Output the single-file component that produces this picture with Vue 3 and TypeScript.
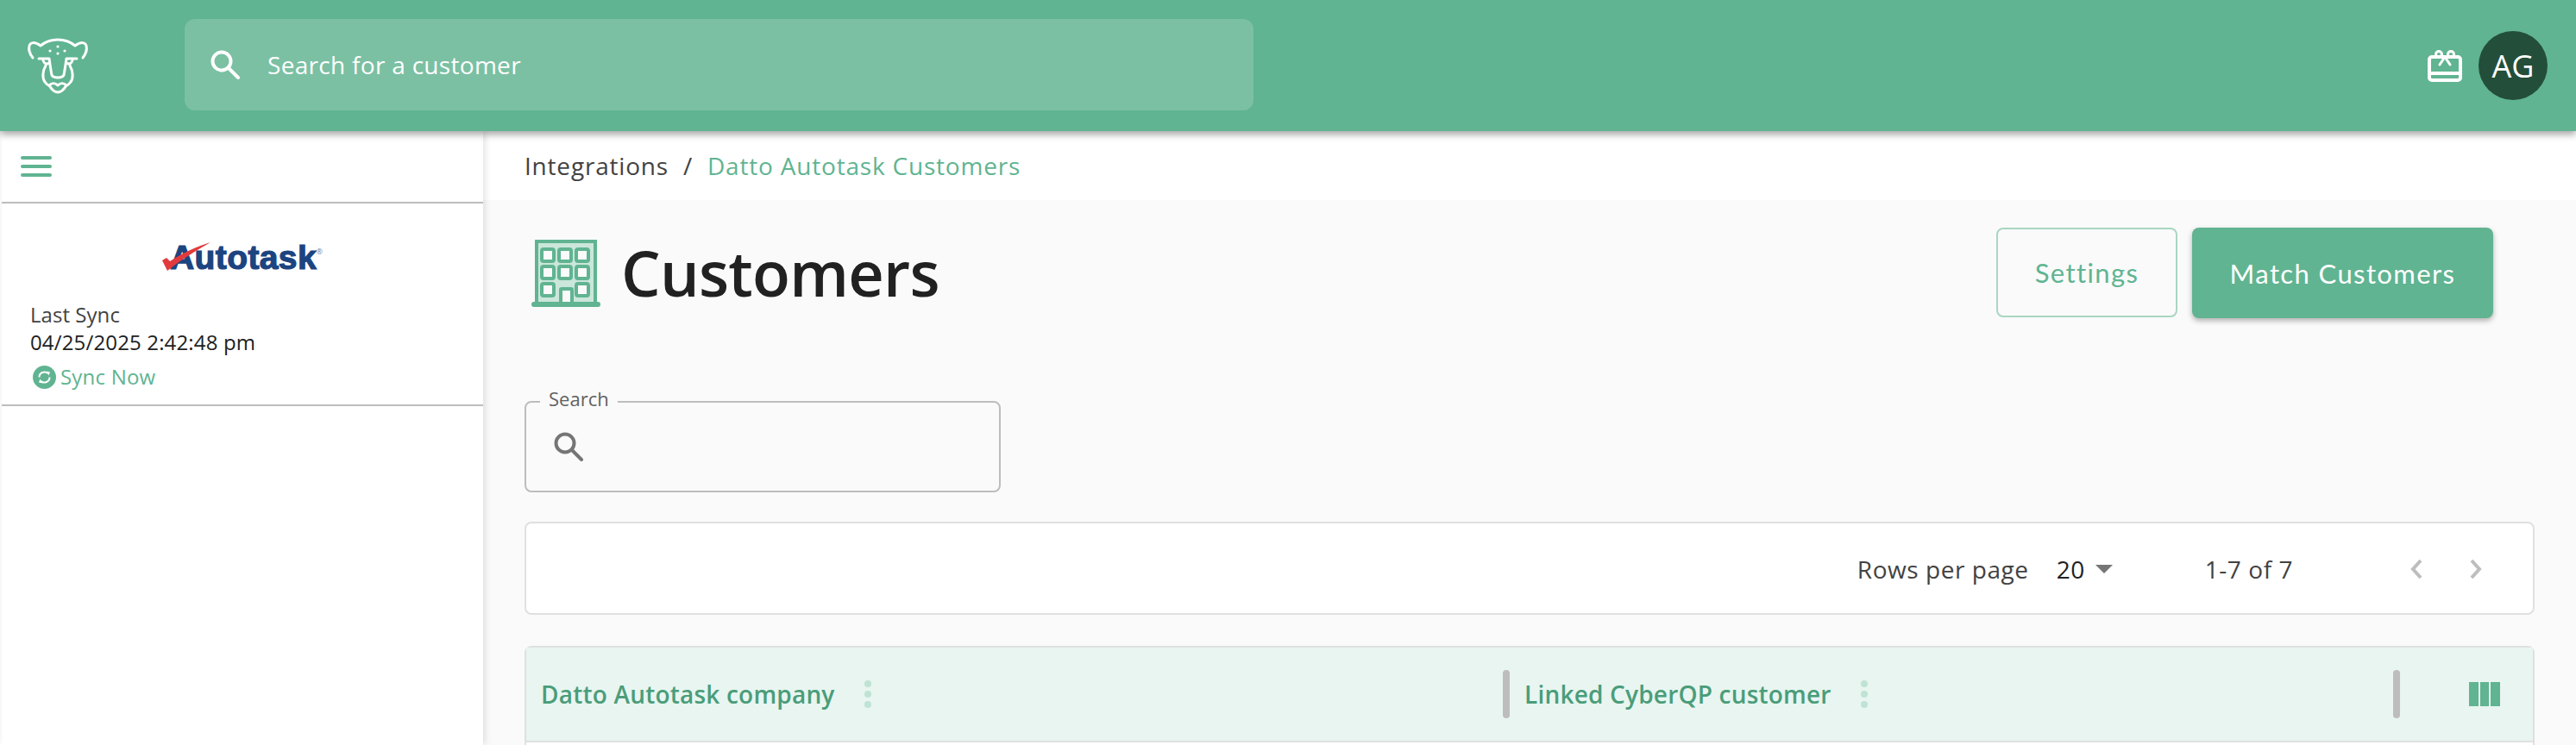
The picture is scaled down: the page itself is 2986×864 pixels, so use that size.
<script setup lang="ts">
const columns = ['Datto Autotask company', 'Linked CyberQP customer']
const windows = [
  [42, 21], [62, 21], [82, 21],
  [42, 41], [62, 41], [82, 41],
  [42, 61], [82, 61],
]
</script>

<template>
  <div class="app">
    <header class="topbar">
      <svg class="logo" viewBox="0 0 110 100" fill="none" stroke="#fff" stroke-width="3" stroke-linecap="round" stroke-linejoin="round">
        <path d="M28 47C24 42 23 37 24 33C25 29 30 28 37 33C43 28 50 26 57 26C64 26 71 28 77 33C84 28 89 29 90 33C91 37 90 42 86 47" />
        <path d="M35 48H47C48 55 49 62 50 67C52 71 62 71 64 67C65 62 66 55 67 48H79" />
        <path d="M40 50C41 54 44 55 47 53M74 50C73 54 70 55 67 53" />
        <path d="M43 56C39 63 39 71 42 75C44 78 46 79 48 80M71 56C75 63 75 71 72 75C70 78 68 79 66 80" />
        <path d="M47 79C50 76 54 76 57 79C60 76 64 76 67 79C64 84 60 87 57 87C54 87 50 84 47 79Z" />
        <g fill="#fff" stroke="none">
          <circle cx="48" cy="39" r="1.6" />
          <circle cx="57" cy="34" r="1.6" />
          <circle cx="57" cy="42" r="1.6" />
          <circle cx="65" cy="39" r="1.6" />
        </g>
      </svg>
      <div class="top-search">
        <svg class="top-search-icon" viewBox="0 0 34 34" fill="none" stroke="#fff" stroke-width="4" stroke-linecap="round">
          <circle cx="13" cy="13" r="10.5" />
          <path d="M21 21L32 32" />
        </svg>
        <span>Search for a customer</span>
      </div>
      <div class="top-actions">
        <svg class="gift" viewBox="0 0 40 38" fill="none" stroke="#fff" stroke-width="4" stroke-linecap="round" stroke-linejoin="round">
          <rect x="2" y="9" width="36" height="27" rx="3" />
          <path d="M2 28H38" />
          <circle cx="13" cy="6" r="3.5" stroke-width="3" />
          <circle cx="27" cy="6" r="3.5" stroke-width="3" />
          <path d="M20 9L14 18M20 9L26 18" stroke-width="3" />
        </svg>
        <div class="avatar">AG</div>
      </div>
    </header>

    <div class="body">
      <aside class="sidebar">
        <div class="menu-row">
          <div class="hamburger"><i></i><i></i><i></i></div>
        </div>
        <div class="sync-card">
          <div class="brand">
            <span class="brand-text">Autotask</span>
            <svg class="brand-check" viewBox="0 0 56 33">
              <path d="M0 21L5 18L9 22C22 13 40 5 56 0C42 8 22 20 6 33Z" fill="#e23a3c" />
            </svg>
            <span class="brand-reg">®</span>
          </div>
          <div class="sync-label">Last Sync</div>
          <div class="sync-date">04/25/2025 2:42:48 pm</div>
          <div class="sync-now">
            <svg class="sync-icon" viewBox="0 0 27 27">
              <circle cx="13.5" cy="13.5" r="13.5" fill="#60b491" />
              <path d="M7.5 13.5A6 6 0 0 1 17.5 9M19.5 13.5A6 6 0 0 1 9.5 18" fill="none" stroke="#fff" stroke-width="2" />
              <path d="M15.5 6.5L20 7.5L18.5 11.5ZM11.5 20.5L7 19.5L8.5 15.5Z" fill="#fff" />
            </svg>
            <span>Sync Now</span>
          </div>
        </div>
      </aside>

      <main class="main">
        <nav class="crumbs">
          <span>Integrations</span>
          <span class="crumb-sep">/</span>
          <span class="crumb-current">Datto Autotask Customers</span>
        </nav>

        <div class="content">
          <div class="title-row">
            <div class="title">
              <svg class="building" viewBox="0 0 80 78">
                <rect x="6" y="2" width="68" height="72" fill="#cbe6da" stroke="#60b491" stroke-width="4" />
                <rect x="0" y="72" width="80" height="6" rx="3" fill="#60b491" />
                <rect
                  v-for="(w, i) in windows"
                  :key="i"
                  class="window"
                  :x="w[0] - 30"
                  :y="w[1] - 10"
                  width="14"
                  height="14"
                  rx="2"
                />
                <rect class="window" x="34" y="57" width="13" height="17" rx="1" />
              </svg>
              <h1>Customers</h1>
            </div>
            <div class="title-actions">
              <button class="btn btn-outline">Settings</button>
              <button class="btn btn-solid">Match Customers</button>
            </div>
          </div>

          <div class="search-field">
            <label>Search</label>
            <svg class="search-field-icon" viewBox="0 0 34 34" fill="none" stroke="#757575" stroke-width="4" stroke-linecap="round">
              <circle cx="13" cy="13" r="10.5" />
              <path d="M21 21L32 32" />
            </svg>
          </div>

          <div class="pager">
            <span>Rows per page</span>
            <span class="page-size">20</span>
            <i class="caret"></i>
            <span class="page-range">1-7 of 7</span>
            <svg class="chevron" viewBox="0 0 16 24" fill="none" stroke="#bdbdbd" stroke-width="4">
              <path d="M13 2L4 12L13 22" />
            </svg>
            <svg class="chevron chevron-next" viewBox="0 0 16 24" fill="none" stroke="#bdbdbd" stroke-width="4">
              <path d="M3 2L12 12L3 22" />
            </svg>
          </div>

          <div class="table">
            <div class="thead">
              <div v-for="col in columns" :key="col" class="th">
                <span class="th-label">{{ col }}</span>
                <span class="dots"><i></i><i></i><i></i></span>
                <span class="th-sep"></span>
              </div>
              <div class="th-tools">
                <span class="col-icon"><i></i><i></i><i></i></span>
              </div>
            </div>
          </div>
        </div>
      </main>
    </div>
  </div>
</template>

<style>
html,
body {
  margin: 0;
  background: #fff;
}
</style>

<style scoped>
.app {
  width: 2986px;
  height: 864px;
  overflow: hidden;
  display: flex;
  flex-direction: column;
  font-family: 'Open Sans', 'Noto Sans', sans-serif;
  color: #212121;
}

.topbar {
  flex: none;
  position: relative;
  z-index: 2;
  height: 152px;
  display: flex;
  align-items: center;
  background: #60b491;
  box-shadow: 0 4px 8px rgba(0, 0, 0, 0.35);
}

.logo {
  flex: none;
  width: 110px;
  height: 100px;
  margin: -12px 94px 0 10px;
}

.top-search {
  width: 1239px;
  height: 106px;
  margin-bottom: 2px;
  display: flex;
  align-items: center;
  border-radius: 12px;
  background: #7bc0a3;
  color: #fff;
  font-size: 28px;
  letter-spacing: 0.3px;
}

.top-search-icon {
  width: 34px;
  height: 34px;
  margin: 0 32px 0 30px;
}

.top-actions {
  margin-left: auto;
  margin-right: 33px;
  display: flex;
  align-items: center;
  gap: 19px;
}

.gift {
  width: 40px;
  height: 38px;
}

.avatar {
  width: 80px;
  height: 80px;
  border-radius: 50%;
  display: flex;
  align-items: center;
  justify-content: center;
  background: #234e3a;
  color: #fff;
  font-size: 36px;
}

.body {
  flex: 1;
  display: flex;
  min-height: 0;
}

.sidebar {
  flex: none;
  position: relative;
  z-index: 1;
  width: 558px;
  margin-left: 2px;
  background: #fff;
  box-shadow: 2px 0 8px rgba(0, 0, 0, 0.12);
}

.menu-row {
  height: 82px;
  display: flex;
  align-items: center;
  padding-left: 22px;
  border-bottom: 2px solid #bdbdbd;
}

.hamburger {
  width: 36px;
  display: flex;
  flex-direction: column;
  gap: 6px;
}

.hamburger i {
  height: 4px;
  border-radius: 2px;
  background: #60b491;
}

.sync-card {
  height: 233px;
  box-sizing: content-box;
  padding-left: 33px;
  border-bottom: 2px solid #bdbdbd;
  font-size: 24px;
}

.brand {
  position: relative;
  width: 186px;
  height: 33px;
  margin: 0 0 0 153px;
  top: 45px;
}

.brand-text {
  position: absolute;
  left: 9px;
  top: -7px;
  font-family: 'Liberation Sans', sans-serif;
  font-size: 39px;
  line-height: 50px;
  font-weight: 700;
  letter-spacing: 0.4px;
  color: #1b4480;
  -webkit-text-stroke: 1.2px #1b4480;
}

.brand-check {
  position: absolute;
  left: 0;
  top: 0;
  width: 56px;
  height: 33px;
}

.brand-reg {
  position: absolute;
  right: 0;
  top: 6px;
  font-size: 9px;
  line-height: 10px;
  color: #7d8ea8;
}

.sync-label {
  margin-top: 80px;
  line-height: 32px;
  letter-spacing: 0.05px;
  color: #424242;
}

.sync-date {
  line-height: 32px;
  letter-spacing: 0.15px;
  color: #212121;
}

.sync-now {
  margin-top: 8px;
  display: flex;
  align-items: center;
  gap: 5px;
  line-height: 32px;
  letter-spacing: 0.2px;
  color: #60b491;
}

.sync-icon {
  width: 27px;
  height: 27px;
  margin-left: 3px;
}

.main {
  flex: 1;
  min-width: 0;
  background: #fafafa;
}

.crumbs {
  height: 80px;
  display: flex;
  align-items: center;
  padding-left: 48px;
  background: #fff;
  font-size: 28px;
  letter-spacing: 0.8px;
  color: #424242;
}

.crumb-sep {
  margin: 0 17px;
}

.crumb-current {
  color: #60b491;
}

.content {
  padding: 32px 48px 0;
}

.title-row {
  display: flex;
  align-items: center;
  justify-content: space-between;
  height: 105px;
}

.title {
  display: flex;
  align-items: center;
  gap: 24px;
  padding-left: 8px;
}

.title h1 {
  margin: 0;
  font-size: 72px;
  line-height: 105px;
  font-weight: 600;
  letter-spacing: -0.7px;
}

.building {
  width: 80px;
  height: 78px;
}

.window {
  fill: #fafafa;
  stroke: #60b491;
  stroke-width: 4;
}

.title-actions {
  display: flex;
  gap: 17px;
  margin-right: 48px;
}

.btn {
  height: 105px;
  border-radius: 8px;
  font-family: Lato, 'Noto Sans', sans-serif;
  font-size: 31px;
  letter-spacing: 1.4px;
  cursor: pointer;
}

.btn-outline {
  width: 210px;
  height: 104px;
  border: 2px solid #a9d6c3;
  background: transparent;
  color: #60b491;
}

.btn-solid {
  width: 349px;
  border: none;
  background: #60b491;
  color: #fff;
  box-shadow: 0 3px 6px rgba(0, 0, 0, 0.3);
}

.search-field {
  position: relative;
  box-sizing: border-box;
  width: 552px;
  height: 106px;
  margin-top: 96px;
  display: flex;
  align-items: center;
  padding-left: 32px;
  border: 2px solid #bdbdbd;
  border-radius: 8px;
}

.search-field label {
  position: absolute;
  left: 16px;
  top: -20px;
  padding: 0 10px;
  background: #fafafa;
  font-size: 22px;
  line-height: 30px;
  color: #616161;
}

.search-field-icon {
  width: 34px;
  height: 34px;
}

.pager {
  box-sizing: border-box;
  height: 108px;
  margin-top: 34px;
  padding-top: 2px;
  display: flex;
  align-items: center;
  justify-content: flex-end;
  padding-right: 58px;
  border: 2px solid #e0e0e0;
  border-radius: 8px;
  background: #fff;
  font-size: 28px;
  letter-spacing: 0.55px;
  color: #424242;
}

.page-size {
  margin-left: 32px;
  color: #212121;
}

.caret {
  margin-left: 12px;
  border-left: 10px solid transparent;
  border-right: 10px solid transparent;
  border-top: 10px solid #757575;
}

.page-range {
  margin-left: 107px;
}

.chevron {
  width: 16px;
  height: 24px;
  margin-left: 135px;
}

.chevron-next {
  margin-left: 53px;
}

.table {
  margin-top: 36px;
  height: 200px;
  border: 2px solid #e0e0e0;
  border-radius: 8px 8px 0 0;
  background: #fff;
}

.thead {
  height: 108px;
  display: grid;
  grid-template-columns: 1140px 1032px 1fr;
  align-items: center;
  border-bottom: 2px solid #e0e0e0;
  background: #e8f5f0;
}

.th {
  height: 56px;
  display: flex;
  align-items: center;
  padding-left: 17px;
}

.th-label {
  font-size: 28px;
  font-weight: 600;
  letter-spacing: 0.2px;
  color: #4a9d7a;
}

.dots {
  display: flex;
  flex-direction: column;
  gap: 4px;
  margin-left: 34px;
}

.dots i {
  width: 8px;
  height: 8px;
  border-radius: 50%;
  background: #bfe3d4;
}

.th-sep {
  width: 8px;
  height: 56px;
  margin-left: auto;
  border-radius: 4px;
  background: #bdbdbd;
}

.th-tools {
  padding-left: 80px;
}

.col-icon {
  display: flex;
  gap: 2px;
  width: 36px;
  height: 28px;
}

.col-icon i {
  flex: 1;
  background: #60b491;
}
</style>
